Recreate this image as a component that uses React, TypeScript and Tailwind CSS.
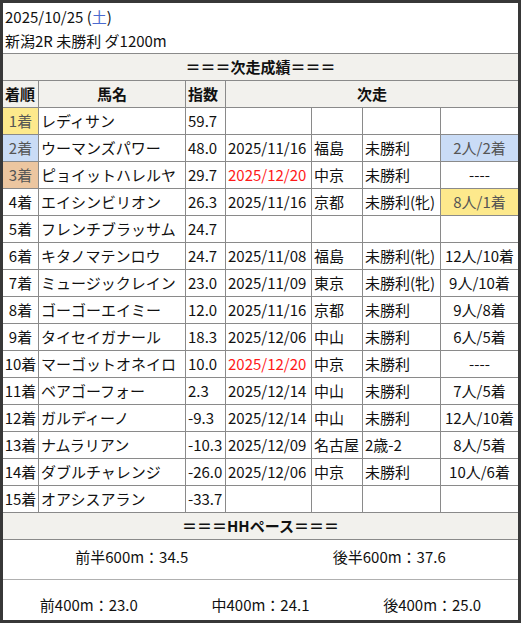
import React from 'react';

type Row = {
  rank: string;
  name: string;
  score: string;
  date?: string;
  dateRed?: boolean;
  place?: string;
  race?: string;
  result?: string;
  rankBg?: string;
  resultBg?: string;
};

const rows: Row[] = [
  { rank: '1着', name: 'レディサン', score: '59.7', rankBg: 'bg-[#fde98c]' },
  { rank: '2着', name: 'ウーマンズパワー', score: '48.0', date: '2025/11/16', place: '福島', race: '未勝利', result: '2人/2着', rankBg: 'bg-[#cadcf6]', resultBg: 'bg-[#cadcf6]' },
  { rank: '3着', name: 'ピョイットハレルヤ', score: '29.7', date: '2025/12/20', dateRed: true, place: '中京', race: '未勝利', result: '----', rankBg: 'bg-[#ecc6a0]' },
  { rank: '4着', name: 'エイシンビリオン', score: '26.3', date: '2025/11/16', place: '京都', race: '未勝利(牝)', result: '8人/1着', resultBg: 'bg-[#fde98c]' },
  { rank: '5着', name: 'フレンチブラッサム', score: '24.7' },
  { rank: '6着', name: 'キタノマテンロウ', score: '24.7', date: '2025/11/08', place: '福島', race: '未勝利(牝)', result: '12人/10着' },
  { rank: '7着', name: 'ミュージックレイン', score: '23.0', date: '2025/11/09', place: '東京', race: '未勝利(牝)', result: '9人/10着' },
  { rank: '8着', name: 'ゴーゴーエイミー', score: '12.0', date: '2025/11/16', place: '京都', race: '未勝利', result: '9人/8着' },
  { rank: '9着', name: 'タイセイガナール', score: '18.3', date: '2025/12/06', place: '中山', race: '未勝利', result: '6人/5着' },
  { rank: '10着', name: 'マーゴットオネイロ', score: '10.0', date: '2025/12/20', dateRed: true, place: '中京', race: '未勝利', result: '----' },
  { rank: '11着', name: 'ベアゴーフォー', score: '2.3', date: '2025/12/14', place: '中山', race: '未勝利', result: '7人/5着' },
  { rank: '12着', name: 'ガルディーノ', score: '-9.3', date: '2025/12/14', place: '中山', race: '未勝利', result: '12人/10着' },
  { rank: '13着', name: 'ナムラリアン', score: '-10.3', date: '2025/12/09', place: '名古屋', race: '2歳-2', result: '8人/5着' },
  { rank: '14着', name: 'ダブルチャレンジ', score: '-26.0', date: '2025/12/06', place: '中京', race: '未勝利', result: '10人/6着' },
  { rank: '15着', name: 'オアシスアラン', score: '-33.7' },
];

const cell = 'h-[27px] border-b border-r border-[#8a8a8a] flex items-center px-[2px] whitespace-nowrap overflow-hidden';

export default function App() {
  return (
    <div
      className="w-[521px] h-[623px] bg-white border-[3px] border-t-[3px] border-[#383838] text-[15px] text-[#111] overflow-hidden"
      style={{ fontFamily: '"Noto Sans CJK JP", "Noto Sans", sans-serif' }}
    >
      {/* Race header */}
      <div className="h-[50px] pl-[2px] pt-[2px] leading-[24px]">
        <div>
          2025/10/25 (<span className="text-[#4a6ad0]">土</span>)
        </div>
        <div>新潟2R 未勝利 ダ1200m</div>
      </div>

      <div className="h-[28px] border-y border-[#8a8a8a] bg-[#f2f1ed] flex items-center justify-center font-bold">
        ＝＝＝次走成績＝＝＝
      </div>

      <div className="grid grid-cols-[36px_147px_40px_86px_51px_78px_77px] leading-[20px]">
        <div className={`${cell} bg-[#f2f1ed] font-bold`}>着順</div>
        <div className={`${cell} bg-[#f2f1ed] font-bold justify-center`}>馬名</div>
        <div className={`${cell} bg-[#f2f1ed] font-bold`}>指数</div>
        <div className={`${cell} col-span-4 border-r-0 bg-[#f2f1ed] font-bold justify-center`}>次走</div>

        {rows.map((r) => (
          <React.Fragment key={r.rank}>
            <div className={`${cell} justify-center ${r.rankBg ? r.rankBg + ' text-[#555]' : ''}`}>{r.rank}</div>
            <div className={cell}>{r.name}</div>
            <div className={cell}>{r.score}</div>
            <div className={`${cell} ${r.dateRed ? 'text-[#ff1a1a]' : ''}`}>{r.date}</div>
            <div className={cell}>{r.place}</div>
            <div className={cell}>{r.race}</div>
            <div className={`${cell} border-r-0 justify-center ${r.resultBg ? r.resultBg + ' text-[#555]' : ''}`}>{r.result}</div>
          </React.Fragment>
        ))}
      </div>

      <div className="h-[27px] border-b border-[#8a8a8a] bg-[#f2f1ed] flex items-center justify-center font-bold">
        ＝＝＝HHペース＝＝＝
      </div>

      <div className="h-[40px] border-b border-[#b0b0b0] grid grid-cols-2 pt-[7px] leading-[20px]">
        <div className="text-center">前半600m：34.5</div>
        <div className="text-center">後半600m：37.6</div>
      </div>
      <div className="h-[40px] grid grid-cols-3 pt-[15px] leading-[20px]">
        <div className="text-center">前400m：23.0</div>
        <div className="text-center">中400m：24.1</div>
        <div className="text-center">後400m：25.0</div>
      </div>
    </div>
  );
}
